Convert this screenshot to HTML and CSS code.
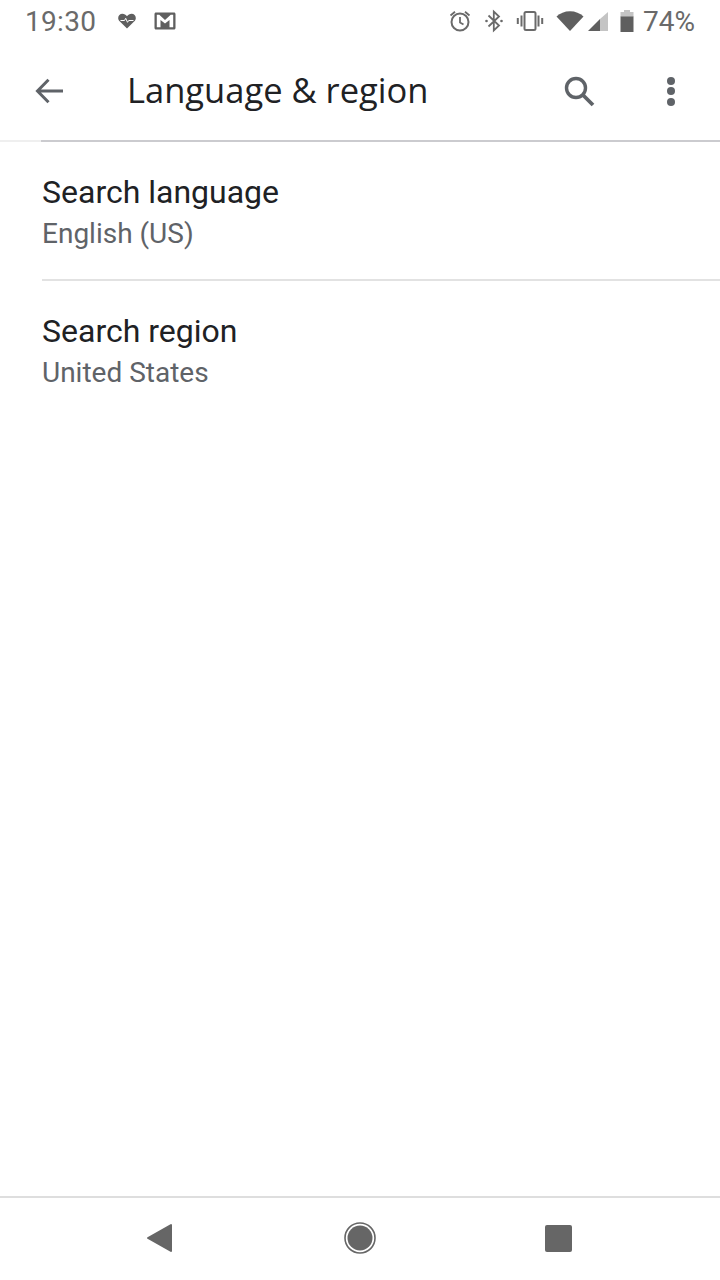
FILE: index.html
```html
<!doctype html>
<html lang="en">
<head>
  <meta charset="utf-8" />
  <title>Language &amp; region</title>
  <link rel="stylesheet" href="styles.css">
</head>
<body>
  <div class="screen">
    <div class="status-bar">
      <div class="status-left">
        <span class="clock">19:30</span>
        <svg class="icon-heart" viewBox="0 0 18 16" width="18" height="16">
          <path fill="#5f5f5f" d="M9 15.5 1.9 8.6C.6 7.3.2 6.2.2 4.9.2 2.5 2 .7 4.4.7c1.9 0 3.500.9 4.600 2.500C10.100 1.600 11.700.7 13.600.7c2.400 0 4.200 1.800 4.200 4.200 0 1.300-.4 2.400-1.700 3.700z"/>
          <path fill="none" stroke="#fff" stroke-width="1" d="M2.500 7.500h4l1.200-2.200 1.800 4 1.200-1.800h4.800"/>
        </svg>
        <svg class="icon-mail" viewBox="0 0 22 18" width="22" height="18">
          <path fill="#5f5f5f" fill-rule="evenodd" d="M2 .5h18c.9 0 1.500.6 1.500 1.500v14c0 .9-.6 1.500-1.500 1.500H2c-.9 0-1.500-.6-1.500-1.500V2C.5 1.100 1.100.5 2 .5zM2.800 2.800v12.400h3.700V8l4.500 3.500L15.500 8v7.200h3.700V2.800h-2.500L11 8 5.300 2.800z"/>
        </svg>
      </div>
      <div class="status-right">
        <svg class="icon-alarm" viewBox="0 0 24 24" width="24" height="24">
          <circle cx="12" cy="13" r="8.500" fill="none" stroke="#6a6a6a" stroke-width="2"/>
          <path fill="none" stroke="#6a6a6a" stroke-width="1.800" d="M12 8v5.500l3.500 2M2.500 6.500l4.500-3.800M21.500 6.500 17 2.700"/>
        </svg>
        <svg class="icon-bt" viewBox="0 0 20 24" width="20" height="24">
          <path fill="none" stroke="#6a6a6a" stroke-width="1.800" d="M4.500 6.500 15 16.500 9.800 21.500V2.500L15 7.500 4.500 17.500"/>
          <circle cx="2.500" cy="12" r="1.300" fill="#6a6a6a"/>
          <circle cx="17.500" cy="12" r="1.300" fill="#6a6a6a"/>
        </svg>
        <svg class="icon-vibrate" viewBox="0 0 28 22" width="28" height="22">
          <rect x="8.500" y="2" width="11" height="18" rx="1.500" fill="none" stroke="#6a6a6a" stroke-width="2"/>
          <path fill="#6a6a6a" d="M4.500 5.500h2v11h-2zM21.500 5.500h2v11h-2zM.8 8h2v6h-2zM25.200 8h2v6h-2z"/>
        </svg>
        <svg class="icon-signal" viewBox="0 0 54 22" width="54" height="22">
          <path fill="#5f5f5f" d="M14 21 .5 6.500C4 3.200 8.700 1.200 14 1.200s10 2 13.500 5.300z"/>
          <path fill="#c4c4c4" d="M52 2v19H44V9z"/>
          <path fill="#5f5f5f" d="M44 9v12H32z"/>
        </svg>
        <svg class="icon-battery" viewBox="0 0 14 22" width="14" height="22">
          <path fill="#c4c4c4" d="M4 0h6v2h3.500v5H.5V2H4z"/>
          <path fill="#5f5f5f" d="M.5 6.500h13V22H.5z"/>
        </svg>
        <span class="battery-pct">74%</span>
      </div>
    </div>

    <header class="app-bar">
      <svg class="icon-back" viewBox="0 0 30 28" width="30" height="28">
        <path fill="none" stroke="#5f6368" stroke-width="3" d="M29 14H4M14.500 2.800 3.500 14l11 11.200"/>
      </svg>
      <h1 class="title">Language &amp; region</h1>
      <svg class="icon-search" viewBox="0 0 32 32" width="32" height="32">
        <circle cx="13" cy="13" r="9.500" fill="none" stroke="#5f6368" stroke-width="3.400"/>
        <path fill="none" stroke="#5f6368" stroke-width="3.800" d="m20 20 10 10"/>
      </svg>
      <div class="dots"><i></i><i></i><i></i></div>
    </header>

    <main class="content">
      <div class="row">
        <div class="row-title">Search language</div>
        <div class="row-sub">English (US)</div>
      </div>
      <div class="row">
        <div class="row-title">Search region</div>
        <div class="row-sub">United States</div>
      </div>
    </main>

    <nav class="nav-bar">
      <svg class="nav-back" viewBox="0 0 26 30" width="26" height="30">
        <path fill="#666" stroke="#666" stroke-width="2" stroke-linejoin="round" d="M25 2v26L2 15z"/>
      </svg>
      <svg viewBox="0 0 32 32" width="32" height="32">
        <circle cx="16" cy="16" r="15" fill="none" stroke="#666" stroke-width="1.600"/>
        <circle cx="16" cy="16" r="12.500" fill="#666"/>
      </svg>
      <div class="nav-square"></div>
    </nav>
  </div>
</body>
</html>
```
FILE: styles.css
```css
* {
  box-sizing: border-box;
}

body {
  margin: 0;
  background: #fff;
  font-family: Roboto, sans-serif;
}

.screen {
  width: 720px;
  height: 1280px;
  display: flex;
  flex-direction: column;
  overflow: hidden;
}

.status-bar {
  height: 42px;
  display: flex;
  justify-content: space-between;
  align-items: center;
  padding: 0 25px;
  color: #6a6a6a;
  font-size: 28px;
}

.status-left,
.status-right {
  display: flex;
  align-items: center;
}

.clock {
  margin-right: 22px;
  letter-spacing: 0.3px;
}

.icon-heart {
  margin-right: 18px;
}

.icon-alarm {
  margin-right: 12px;
}

.icon-bt {
  margin-right: 12px;
}

.icon-vibrate {
  margin-right: 12px;
}

.icon-signal {
  margin-right: 10px;
}

.icon-battery {
  margin-right: 9px;
}

.app-bar {
  height: 100px;
  display: flex;
  align-items: center;
  padding: 0 45px 0 34px;
  border-bottom: 2px solid #cbcbcf;
  border-image: linear-gradient(to right, #efefef 42px, #cbcbcf 42px) 1;
}

.title {
  margin: 0 0 0 63px;
  padding-bottom: 3px;
  flex: 1;
  font-family: "Open Sans", sans-serif;
  font-size: 34.500px;
  font-weight: 400;
  color: #202124;
}

.icon-search {
  margin-right: 72px;
}

.dots {
  display: flex;
  flex-direction: column;
  gap: 2.500px;
}

.dots i {
  width: 8px;
  height: 8px;
  border-radius: 50%;
  background: #5f6368;
}

.content {
  flex: 1;
  padding-left: 42px;
}

.row {
  height: 139px;
  padding-top: 30px;
  border-bottom: 2px solid #e2e2e2;
}

.row:last-child {
  border-bottom: 0;
}

.row-title {
  font-size: 32px;
  line-height: 41px;
  margin-bottom: 2px;
  color: #202124;
}

.row-sub {
  font-size: 28px;
  line-height: 38px;
  color: #5f6368;
}

.nav-bar {
  height: 84px;
  border-top: 2px solid #dedede;
  padding: 0 2px 2px 0;
  display: flex;
  justify-content: center;
  align-items: center;
  gap: 169px;
}

.nav-back {
  margin-right: 3px;
}

.nav-square {
  width: 27px;
  height: 27px;
  border-radius: 2px;
  background: #666;
}
```
